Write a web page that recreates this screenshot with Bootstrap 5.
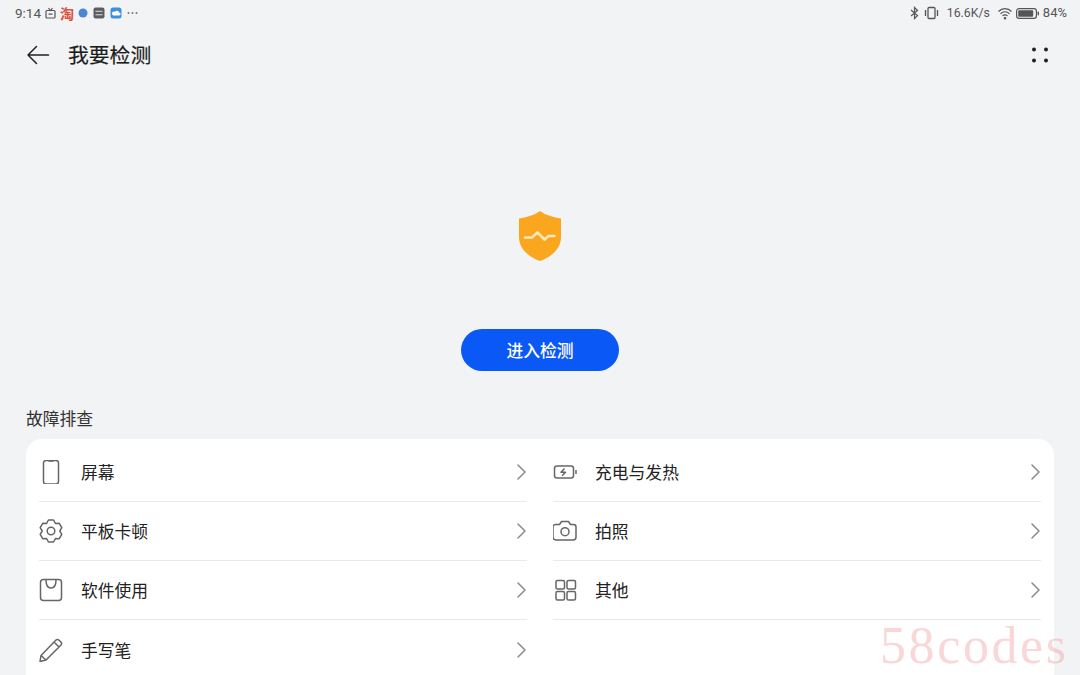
<!DOCTYPE html>
<html lang="zh">
<head>
    <meta charset="UTF-8">
    <meta name="viewport" content="width=device-width, initial-scale=1.0">
    <title>我要检测</title>
    <link href="https://cdn.jsdelivr.net/npm/bootstrap@5.3.1/dist/css/bootstrap.min.css" rel="stylesheet">
    <style>
        html, body { height: 675px; overflow: hidden; }
        body { background: #f2f3f5; color: #222; font-family: "Noto Sans CJK SC", "Noto Sans", sans-serif; position: relative; }
        .status-bar { height: 26px; padding: 0 13px 0 15px; font-family: Roboto, "Noto Sans", sans-serif; font-size: 13px; color: #555; }
        .status-bar svg { display: block; flex: none; }
        .clock-text { font-size: 13.5px; margin-right: 4px; }
        .tao-mark { font-family: "Noto Sans CJK SC", sans-serif; font-size: 14px; font-weight: 700; color: #d9503f; margin: 0 4px; line-height: 1; }
        .st-gap { margin-left: 5px; }
        .speed-text { font-size: 12.3px; margin: 0 7px 0 8px; }
        .batt-gap { margin-left: 3px; margin-right: 3px; }
        .app-title { height: 58px; padding: 0 26px; }
        .app-title h1 { font-size: 20.8px; font-weight: 400; margin: -2px 0 0 18px; color: #1c1c1c; line-height: 1; -webkit-text-stroke: 0.2px #1c1c1c; }
        .more-dots { margin-left: auto; margin-right: 2px; }
        .hero { height: 327px; padding-top: 126px; }
        .go-btn { width: 158px; height: 42px; background: #0a59f7; border: 0; border-radius: 21px; color: #fff; font-size: 16.8px; font-weight: 500; margin-top: 67px; padding: 2px 0 0; }
        .go-btn:hover { background: #0a59f7; color: #fff; }
        .sec-title { font-size: 16.8px; padding-left: 26px; height: 29px; line-height: 17px; margin-top: -1px; margin-bottom: 0; color: #333; }
        .fault-card { margin: 0 26px; background: #fff; border-radius: 16px 16px 0 0; padding: 4px 13px 0; height: 236px; display: grid; grid-template-columns: 488px 488px; column-gap: 26px; align-content: start; }
        .fault-row { height: 59px; padding-bottom: 1px; border-bottom: 1px solid #e8e9eb; font-size: 16.8px; color: #222; }
        .fault-row span { padding-top: 2px; }
        .fault-row.no-line { border-bottom: 0; height: 55px; padding: 5px 0 0; }
        .ico { width: 24px; height: 24px; margin-right: 18px; flex: none; }
        .chev { margin-left: auto; flex: none; }
        .mark-58 { position: absolute; left: 880px; top: 612px; font-family: "Liberation Serif", serif; font-size: 52px; letter-spacing: 2.6px; line-height: 1.3; color: rgba(240, 130, 130, 0.32); pointer-events: none; }
    </style>
</head>
<body>
    <div class="status-bar d-flex align-items-center">
        <span class="clock-text">9:14</span>
        <svg width="11" height="12" viewBox="0 0 11 12" fill="none" stroke="#555" stroke-width="1.2"><rect x="1" y="3.500" width="9" height="7.500" rx="1"/><path d="M3.500 1l2 2.500 2-2.500M3.500 7.200h4"/></svg>
        <span class="tao-mark">淘</span>
        <svg width="10" height="10" viewBox="0 0 10 10"><circle cx="5" cy="5" r="4.500" fill="#4a86d4"/></svg>
        <svg class="st-gap" width="12" height="12" viewBox="0 0 12 12"><rect x=".5" y=".5" width="11" height="11" rx="2" fill="#5a5f63"/><path d="M2.500 4.300h7M2.500 7.800h7" stroke="#ddd" stroke-width="1"/></svg>
        <svg class="st-gap" width="12" height="12" viewBox="0 0 12 12"><rect x=".5" y=".5" width="11" height="11" rx="2.500" fill="#3d8fe0"/><path d="M3 8.400h6a1.500 1.500 0 0 0 .2-3A2.300 2.300 0 0 0 5 4.800 1.800 1.800 0 0 0 3 8.400z" fill="#fff"/></svg>
        <svg class="st-gap" width="11" height="10" viewBox="0 0 11 10" fill="#777"><circle cx="1.500" cy="5" r="1"/><circle cx="5.500" cy="5" r="1"/><circle cx="9.500" cy="5" r="1"/></svg>
        <div class="ms-auto d-flex align-items-center">
            <svg width="11" height="14" viewBox="0 0 11 14" fill="none" stroke="#555" stroke-width="1.200"><path d="M2 4l6.500 5.500L5.500 12.500V1.500L8.500 4.500 2 10"/></svg>
            <svg class="ms-1" width="15" height="14" viewBox="0 0 15 14" fill="none" stroke="#555" stroke-width="1.300"><rect x="4" y="1.500" width="7" height="11" rx="1"/><path d="M1.500 4v6M13.500 4v6"/></svg>
            <span class="speed-text">16.6K/s</span>
            <svg width="16" height="13" viewBox="0 0 15 13" fill="none" stroke="#555" stroke-width="1.200"><path d="M1 4.500a9 9 0 0 1 13 0M3 6.800a6 6 0 0 1 9 0M5 9a3.200 3.200 0 0 1 5 0"/><circle cx="7.500" cy="11.300" r=".7" fill="#555"/></svg>
            <svg class="batt-gap" width="24" height="13" viewBox="0 0 24 13" fill="none"><rect x=".6" y="1.600" width="19.800" height="9.800" rx="2.400" stroke="#555" stroke-width="1.200"/><rect x="2.200" y="3.200" width="15" height="6.600" rx="1" fill="#555"/><rect x="21.600" y="4.500" width="1.400" height="4" rx=".7" fill="#555"/></svg>
            <span>84%</span>
        </div>
    </div>

    <div class="app-title d-flex align-items-center">
        <svg width="24" height="24" viewBox="0 0 24 24" fill="none" stroke="#222" stroke-width="1.500" stroke-linecap="round" stroke-linejoin="round"><path d="M22.500 12H2M10.500 3.500L2 12l8.500 8.500"/></svg>
        <h1>我要检测</h1>
        <svg class="more-dots" width="24" height="24" viewBox="0 0 24 24" fill="#222"><circle cx="6" cy="6.500" r="2"/><circle cx="18" cy="6.500" r="2"/><circle cx="6" cy="17.500" r="2"/><circle cx="18" cy="17.500" r="2"/></svg>
    </div>

    <div class="hero d-flex flex-column align-items-center">
        <svg width="44" height="52" viewBox="0 0 44 52"><path d="M22 1C16 5.500 8 7.500 1 8.500V27c0 12 10 20 21 24 11-4 21-12 21-24V8.500C36 7.500 28 5.500 22 1z" fill="#faa61e"/><path d="M7 27.500h7l5.500-5 7 7 4-3.500h6" fill="none" stroke="#fde7bd" stroke-width="2.600" stroke-linecap="round" stroke-linejoin="round"/></svg>
        <button type="button" class="btn go-btn">进入检测</button>
    </div>

    <p class="sec-title">故障排查</p>
    <div class="fault-card">
        <div class="fault-row d-flex align-items-center">
            <svg class="ico" viewBox="0 0 24 24" fill="none" stroke="#666" stroke-width="1.500"><rect x="4.500" y=".5" width="15" height="23.500" rx="2.500"/><path d="M9.500 1h5"/></svg>
            <span>屏幕</span>
            <svg class="chev" width="12" height="18" viewBox="0 0 12 18" fill="none" stroke="#8a8a8a" stroke-width="1.500" stroke-linecap="round" stroke-linejoin="round"><path d="M3 2l7 7-7 7"/></svg>
        </div>
        <div class="fault-row d-flex align-items-center">
            <svg class="ico" viewBox="0 0 24 24" fill="none" stroke="#666" stroke-width="1.500" stroke-linejoin="round"><rect x="1.500" y="6" width="19" height="12" rx="2.500"/><path d="M23 10v4M11.500 8.500L8 12.300h4.500L9 15.800"/></svg>
            <span>充电与发热</span>
            <svg class="chev" width="12" height="18" viewBox="0 0 12 18" fill="none" stroke="#8a8a8a" stroke-width="1.500" stroke-linecap="round" stroke-linejoin="round"><path d="M3 2l7 7-7 7"/></svg>
        </div>
        <div class="fault-row d-flex align-items-center">
            <svg class="ico" viewBox="0 0 24 24" fill="none" stroke="#666" stroke-width="1.500" stroke-linejoin="round"><path d="M14.540 1 9.460 1 7.600 4.380 3.740 4.290 1.190 8.700 3.200 12 1.190 15.300 3.740 19.710 7.600 19.620 9.460 23 14.540 23 16.400 19.620 20.260 19.710 22.810 15.300 20.800 12 22.810 8.700 20.260 4.290 16.400 4.380z"/><circle cx="12" cy="12" r="3.800"/></svg>
            <span>平板卡顿</span>
            <svg class="chev" width="12" height="18" viewBox="0 0 12 18" fill="none" stroke="#8a8a8a" stroke-width="1.500" stroke-linecap="round" stroke-linejoin="round"><path d="M3 2l7 7-7 7"/></svg>
        </div>
        <div class="fault-row d-flex align-items-center">
            <svg class="ico" viewBox="0 0 24 24" fill="none" stroke="#666" stroke-width="1.500" stroke-linejoin="round"><path d="M3.500 5.500h3l2-3h7l2 3h3a2.500 2.500 0 0 1 2.500 2.500v10a3 3 0 0 1-3 3h-17a3 3 0 0 1-3-3V8a2.500 2.500 0 0 1 2.500-2.500z"/><circle cx="12" cy="12.700" r="4"/></svg>
            <span>拍照</span>
            <svg class="chev" width="12" height="18" viewBox="0 0 12 18" fill="none" stroke="#8a8a8a" stroke-width="1.500" stroke-linecap="round" stroke-linejoin="round"><path d="M3 2l7 7-7 7"/></svg>
        </div>
        <div class="fault-row d-flex align-items-center">
            <svg class="ico" viewBox="0 0 24 24" fill="none" stroke="#666" stroke-width="1.500" stroke-linecap="round"><rect x="1.500" y="1.500" width="21" height="21" rx="3"/><path d="M7 2c0 5.500 2 8 5 8s5-2.500 5-8"/></svg>
            <span>软件使用</span>
            <svg class="chev" width="12" height="18" viewBox="0 0 12 18" fill="none" stroke="#8a8a8a" stroke-width="1.500" stroke-linecap="round" stroke-linejoin="round"><path d="M3 2l7 7-7 7"/></svg>
        </div>
        <div class="fault-row d-flex align-items-center">
            <svg class="ico" viewBox="0 0 24 24" fill="none" stroke="#666" stroke-width="1.500"><rect x="3" y="2.500" width="8.500" height="8.500" rx="1.500"/><rect x="14" y="2.500" width="8.500" height="8.500" rx="1.500"/><rect x="3" y="13.500" width="8.500" height="8.500" rx="1.500"/><rect x="14" y="13.500" width="8.500" height="8.500" rx="1.500"/></svg>
            <span>其他</span>
            <svg class="chev" width="12" height="18" viewBox="0 0 12 18" fill="none" stroke="#8a8a8a" stroke-width="1.500" stroke-linecap="round" stroke-linejoin="round"><path d="M3 2l7 7-7 7"/></svg>
        </div>
        <div class="fault-row no-line d-flex align-items-center">
            <svg class="ico" viewBox="0 0 24 24" fill="none" stroke="#666" stroke-width="1.500" stroke-linejoin="round"><path d="M1 23.500l1-6L17 2a2 2 0 0 1 2.900 0l2.100 2.100a2 2 0 0 1 0 2.900L7 22zM15 4l5 5M2 17.500L7 22"/></svg>
            <span>手写笔</span>
            <svg class="chev" width="12" height="18" viewBox="0 0 12 18" fill="none" stroke="#8a8a8a" stroke-width="1.500" stroke-linecap="round" stroke-linejoin="round"><path d="M3 2l7 7-7 7"/></svg>
        </div>
    </div>

    <div class="mark-58">58codes</div>

    <script src="https://cdn.jsdelivr.net/npm/bootstrap@5.3.1/dist/js/bootstrap.bundle.min.js"></script>
</body>
</html>
